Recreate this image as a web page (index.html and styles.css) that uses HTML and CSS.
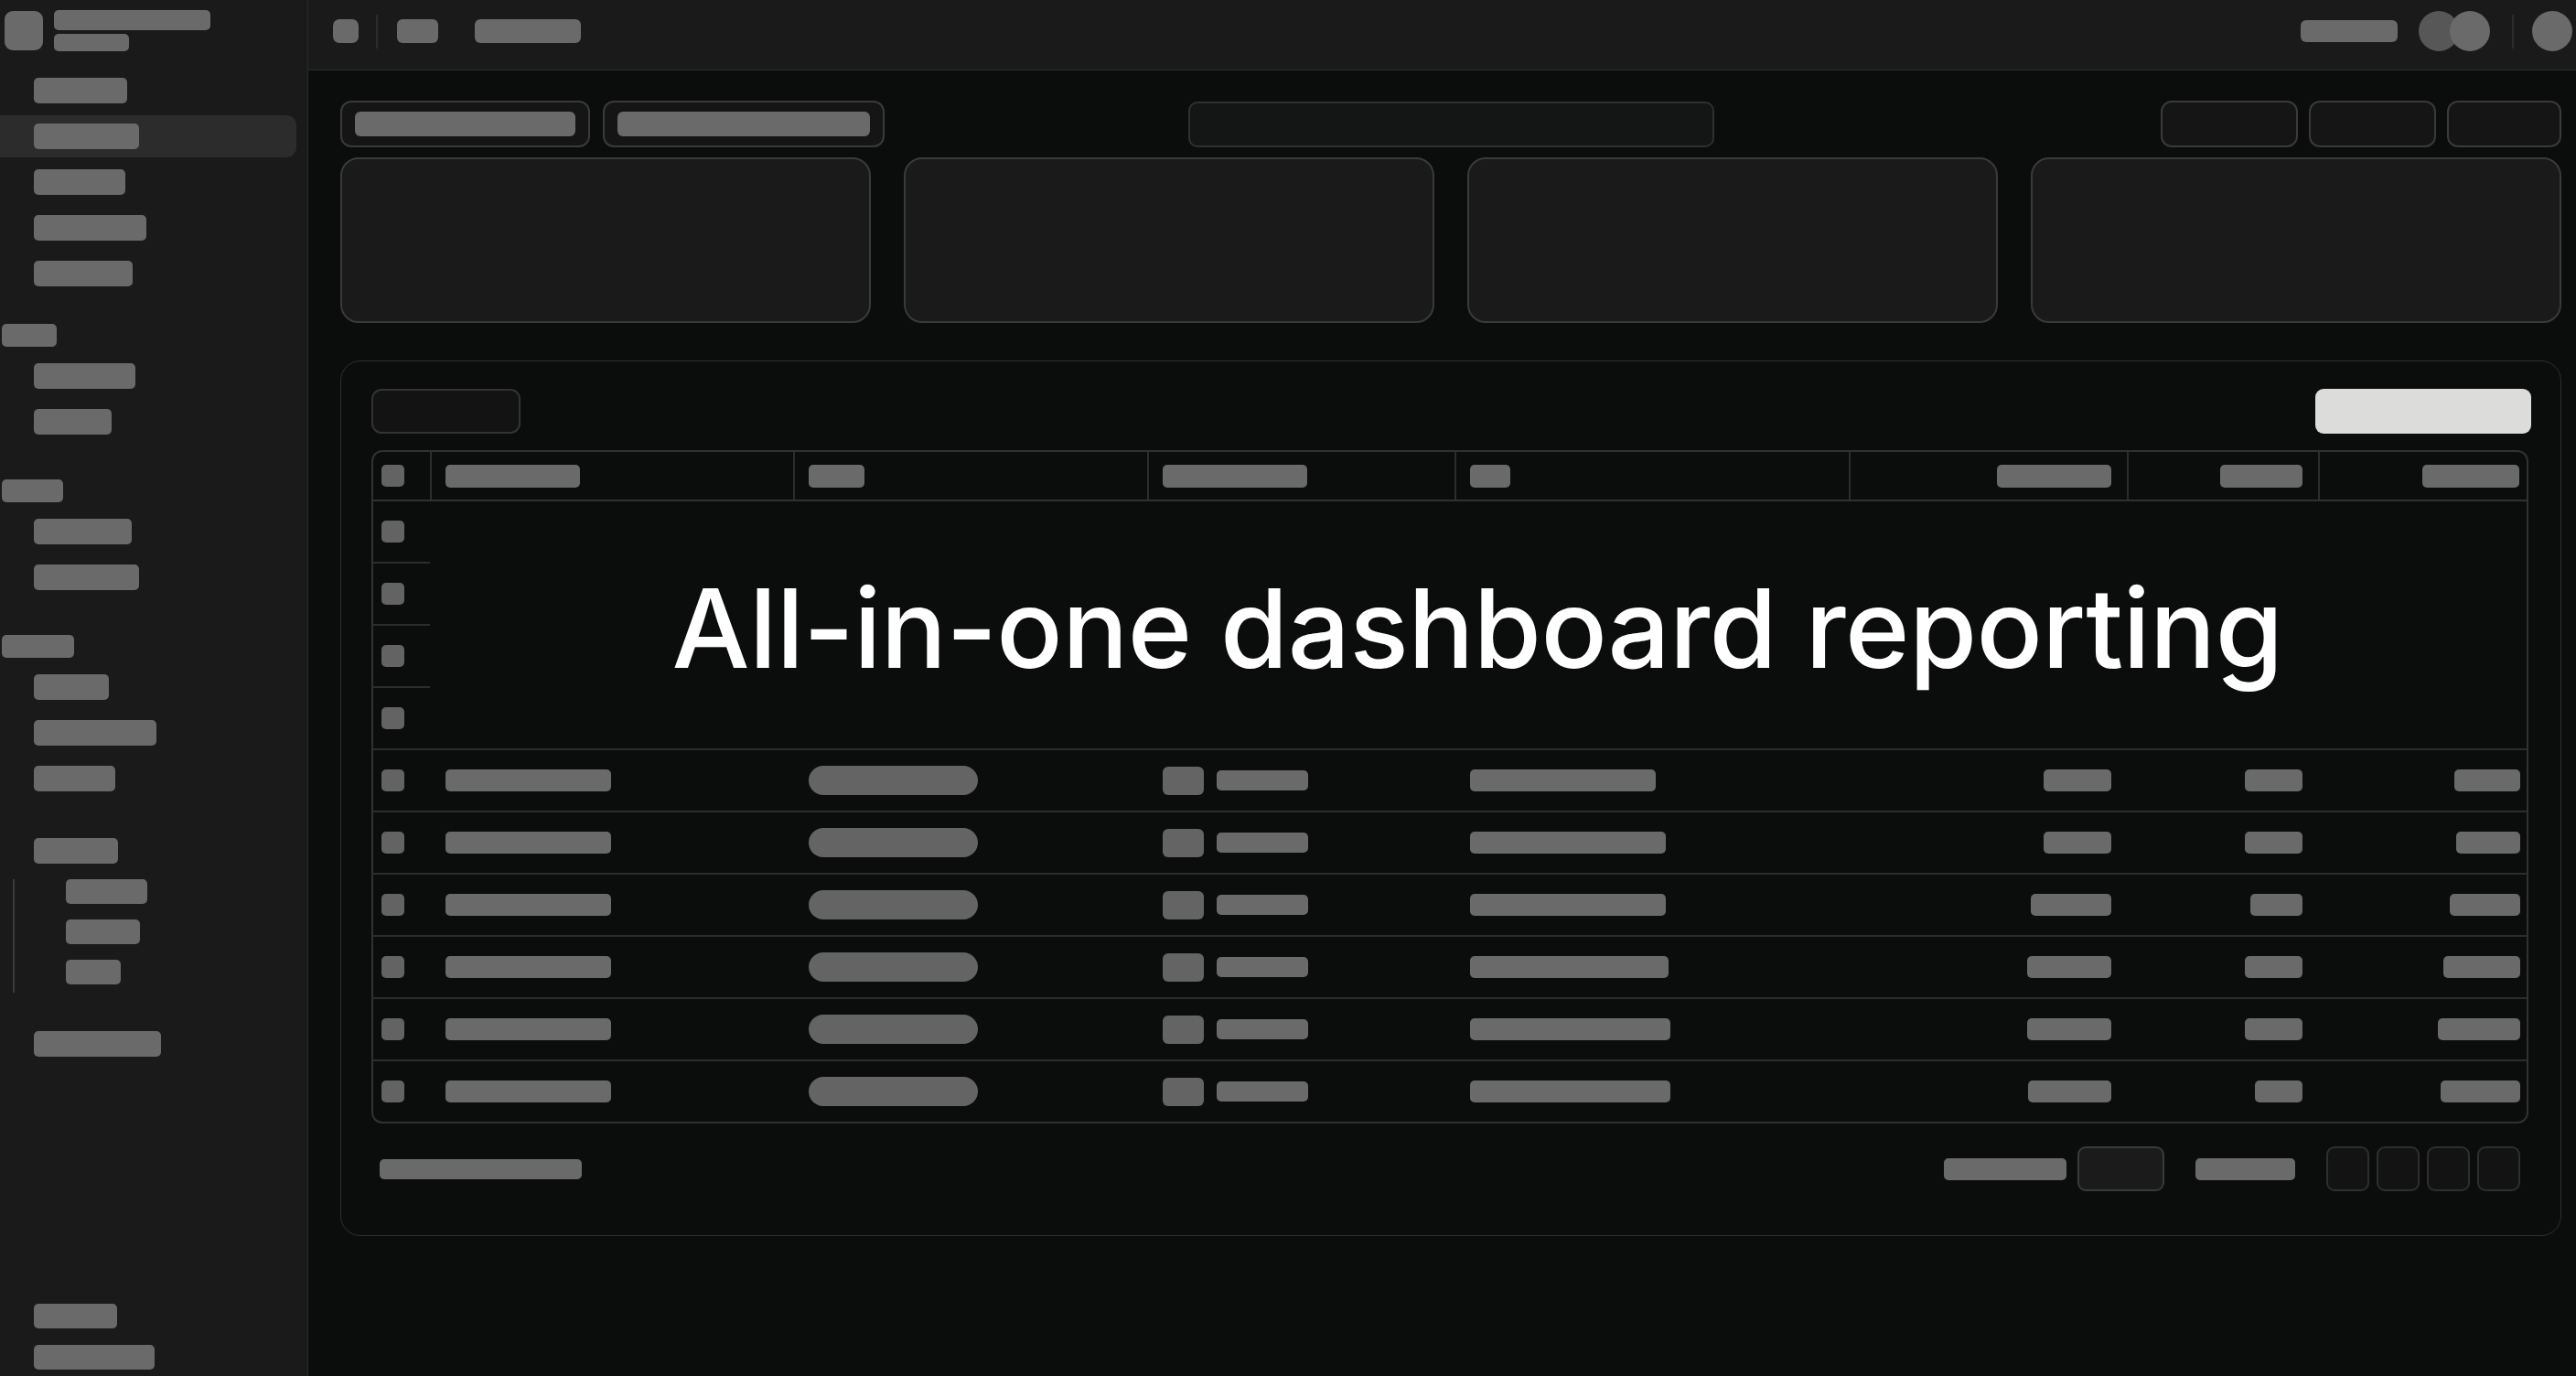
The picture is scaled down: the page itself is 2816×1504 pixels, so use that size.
FILE: index.html
```html
<!DOCTYPE html>
<html lang="en">
<head>
<meta charset="utf-8">
<title>Dashboard reporting</title>
<link rel="stylesheet" href="styles.css">
</head>
<body>
<aside class="sidebar">
  <div class="brand">
    <div class="logo"></div>
    <div class="brand-text">
      <div class="ph brand-title"></div>
      <div class="ph brand-sub"></div>
    </div>
  </div>
  <nav class="nav">
    <div class="nav-item"><span class="ph" style="width:102px"></span></div>
    <div class="nav-item active"><span class="ph" style="width:115px"></span></div>
    <div class="nav-item"><span class="ph" style="width:100px"></span></div>
    <div class="nav-item"><span class="ph" style="width:123px"></span></div>
    <div class="nav-item"><span class="ph" style="width:108px"></span></div>

    <div class="section first"><span class="ph" style="width:60px"></span></div>
    <div class="nav-item"><span class="ph" style="width:111px"></span></div>
    <div class="nav-item"><span class="ph" style="width:85px"></span></div>

    <div class="section"><span class="ph" style="width:67px"></span></div>
    <div class="nav-item"><span class="ph" style="width:107px"></span></div>
    <div class="nav-item"><span class="ph" style="width:115px"></span></div>

    <div class="section"><span class="ph" style="width:79px"></span></div>
    <div class="nav-item"><span class="ph" style="width:82px"></span></div>
    <div class="nav-item"><span class="ph" style="width:134px"></span></div>
    <div class="nav-item"><span class="ph" style="width:89px"></span></div>

    <div class="nav-item spaced"><span class="ph" style="width:92px"></span></div>
    <div class="sub-list">
      <div class="sub-item"><span class="ph" style="width:89px"></span></div>
      <div class="sub-item"><span class="ph" style="width:81px"></span></div>
      <div class="sub-item"><span class="ph" style="width:60px"></span></div>
    </div>
    <div class="nav-item after-sub"><span class="ph" style="width:139px"></span></div>
  </nav>
  <div class="nav-bottom">
    <span class="ph" style="width:91px"></span>
    <span class="ph" style="width:132px"></span>
  </div>
</aside>

<main class="main">
  <header class="topbar">
    <div class="top-left">
      <span class="ph top-square"></span>
      <span class="vdiv"></span>
      <span class="ph top-a"></span>
      <span class="ph top-b"></span>
    </div>
    <div class="top-right">
      <span class="ph top-c"></span>
      <div class="avatars">
        <span class="avatar dim"></span>
        <span class="avatar"></span>
      </div>
      <span class="vdiv"></span>
      <span class="avatar"></span>
    </div>
  </header>

  <div class="content">
    <div class="filters">
      <div class="filter-left">
        <div class="pill-btn"><span class="ph" style="width:241px"></span></div>
        <div class="pill-btn"><span class="ph" style="width:276px"></span></div>
      </div>
      <div class="search"></div>
      <div class="filter-right">
        <div class="btn" style="width:150px"></div>
        <div class="btn" style="width:139px"></div>
        <div class="btn" style="width:125px"></div>
      </div>
    </div>

    <div class="cards">
      <div class="card"></div>
      <div class="card"></div>
      <div class="card"></div>
      <div class="card"></div>
    </div>

    <section class="panel">
      <div class="panel-top">
        <div class="ghost-btn"></div>
        <div class="primary-btn"></div>
      </div>

      <div class="table">
        <div class="trow thead">
          <div class="cell c0"><span class="chk"></span></div>
          <div class="cell"><span class="ph hb" style="width:147px"></span></div>
          <div class="cell"><span class="ph hb" style="width:61px"></span></div>
          <div class="cell"><span class="ph hb" style="width:158px"></span></div>
          <div class="cell"><span class="ph hb" style="width:44px"></span></div>
          <div class="cell end"><span class="ph hb" style="width:125px"></span></div>
          <div class="cell end"><span class="ph hb" style="width:90px"></span></div>
          <div class="cell end last"><span class="ph hb" style="width:106px"></span></div>
        </div>

        <div class="hero">
          <div class="hero-checks">
            <div class="hcell"><span class="chk"></span></div>
            <div class="hcell"><span class="chk"></span></div>
            <div class="hcell"><span class="chk"></span></div>
            <div class="hcell"><span class="chk"></span></div>
          </div>
          <div class="hero-title">
            <h1>All-in-one dashboard reporting</h1>
          </div>
        </div>

        <div class="trow">
          <div class="cell c0"><span class="chk"></span></div>
          <div class="cell"><span class="ph rb" style="width:181px"></span></div>
          <div class="cell"><span class="tag"></span></div>
          <div class="cell"><span class="sq"></span><span class="ph rb2"></span></div>
          <div class="cell"><span class="ph rb" style="width:203px"></span></div>
          <div class="cell end"><span class="ph rb" style="width:74px"></span></div>
          <div class="cell end"><span class="ph rb" style="width:63px"></span></div>
          <div class="cell end last"><span class="ph rb" style="width:72px"></span></div>
        </div>
        <div class="trow">
          <div class="cell c0"><span class="chk"></span></div>
          <div class="cell"><span class="ph rb" style="width:181px"></span></div>
          <div class="cell"><span class="tag"></span></div>
          <div class="cell"><span class="sq"></span><span class="ph rb2"></span></div>
          <div class="cell"><span class="ph rb" style="width:214px"></span></div>
          <div class="cell end"><span class="ph rb" style="width:74px"></span></div>
          <div class="cell end"><span class="ph rb" style="width:63px"></span></div>
          <div class="cell end last"><span class="ph rb" style="width:70px"></span></div>
        </div>
        <div class="trow">
          <div class="cell c0"><span class="chk"></span></div>
          <div class="cell"><span class="ph rb" style="width:181px"></span></div>
          <div class="cell"><span class="tag"></span></div>
          <div class="cell"><span class="sq"></span><span class="ph rb2"></span></div>
          <div class="cell"><span class="ph rb" style="width:214px"></span></div>
          <div class="cell end"><span class="ph rb" style="width:88px"></span></div>
          <div class="cell end"><span class="ph rb" style="width:57px"></span></div>
          <div class="cell end last"><span class="ph rb" style="width:77px"></span></div>
        </div>
        <div class="trow">
          <div class="cell c0"><span class="chk"></span></div>
          <div class="cell"><span class="ph rb" style="width:181px"></span></div>
          <div class="cell"><span class="tag"></span></div>
          <div class="cell"><span class="sq"></span><span class="ph rb2"></span></div>
          <div class="cell"><span class="ph rb" style="width:217px"></span></div>
          <div class="cell end"><span class="ph rb" style="width:92px"></span></div>
          <div class="cell end"><span class="ph rb" style="width:63px"></span></div>
          <div class="cell end last"><span class="ph rb" style="width:84px"></span></div>
        </div>
        <div class="trow">
          <div class="cell c0"><span class="chk"></span></div>
          <div class="cell"><span class="ph rb" style="width:181px"></span></div>
          <div class="cell"><span class="tag"></span></div>
          <div class="cell"><span class="sq"></span><span class="ph rb2"></span></div>
          <div class="cell"><span class="ph rb" style="width:219px"></span></div>
          <div class="cell end"><span class="ph rb" style="width:92px"></span></div>
          <div class="cell end"><span class="ph rb" style="width:63px"></span></div>
          <div class="cell end last"><span class="ph rb" style="width:90px"></span></div>
        </div>
        <div class="trow">
          <div class="cell c0"><span class="chk"></span></div>
          <div class="cell"><span class="ph rb" style="width:181px"></span></div>
          <div class="cell"><span class="tag"></span></div>
          <div class="cell"><span class="sq"></span><span class="ph rb2"></span></div>
          <div class="cell"><span class="ph rb" style="width:219px"></span></div>
          <div class="cell end"><span class="ph rb" style="width:91px"></span></div>
          <div class="cell end"><span class="ph rb" style="width:52px"></span></div>
          <div class="cell end last"><span class="ph rb" style="width:87px"></span></div>
        </div>
      </div>

      <div class="panel-foot">
        <span class="ph foot-left"></span>
        <div class="pager">
          <span class="ph pg-label" style="width:134px"></span>
          <span class="pg-select"></span>
          <span class="ph pg-label gap" style="width:109px"></span>
          <div class="pg-pages">
            <span class="pg"></span>
            <span class="pg"></span>
            <span class="pg"></span>
            <span class="pg"></span>
          </div>
        </div>
      </div>
    </section>
  </div>
</main>
</body>
</html>
```

FILE: styles.css
```css
* { box-sizing: border-box; }

html, body {
  margin: 0;
  padding: 0;
}

body {
  width: 2816px;
  height: 1504px;
  overflow: hidden;
  background: #0b0c0c;
  font-family: Inter, "Noto Sans", "Liberation Sans", sans-serif;
  display: flex;
}

.ph {
  display: block;
  background: #6a6a6a;
  border-radius: 5px;
  height: 27px;
  flex: none;
}

/* ---------- Sidebar ---------- */
.sidebar {
  width: 337px;
  flex: none;
  height: 1504px;
  background: #1a1a1b;
  border-right: 1px solid #2a2a2b;
  display: flex;
  flex-direction: column;
}

.brand {
  height: 74px;
  display: flex;
  align-items: flex-start;
  gap: 12px;
  padding: 12px 0 0 5px;
}

.logo {
  width: 42px;
  height: 43px;
  border-radius: 9px;
  background: #6a6a6a;
}

.brand-text {
  margin-top: -1px;
  display: flex;
  flex-direction: column;
  gap: 4px;
}

.brand-title { width: 171px; height: 22px; }
.brand-sub { width: 82px; height: 19px; }

.nav {
  display: flex;
  flex-direction: column;
}

.nav-item {
  height: 50px;
  display: flex;
  align-items: center;
  padding-left: 37px;
}

.nav-item .ph { height: 28px; }

.nav-item.active {
  height: 46px;
  margin: 2px 12px 2px 0;
  background: #2c2c2d;
  border-radius: 0 11px 11px 0;
}

.section {
  margin: 38px 0 7px;
  padding-left: 2px;
}

.section.first { margin-top: 30px; }

.section .ph { height: 25px; }

.nav-item.spaced { margin-top: 29px; }

.sub-list {
  margin: 6px 0 0 14px;
  padding: 0 0 9px 56px;
  border-left: 2px solid #3a3a3b;
  display: flex;
  flex-direction: column;
  gap: 17px;
}

.sub-item .ph { height: 27px; }

.nav-item.after-sub { margin-top: 31px; }

.nav-bottom {
  margin-top: auto;
  padding: 0 0 7px 37px;
  display: flex;
  flex-direction: column;
  gap: 18px;
}

/* ---------- Main ---------- */
.main {
  flex: 1;
  min-width: 0;
  display: flex;
  flex-direction: column;
}

.topbar {
  height: 77px;
  flex: none;
  background: #1a1a1b;
  border-bottom: 1px solid #2e2e2f;
  display: flex;
  align-items: center;
  justify-content: space-between;
  padding: 0 4px 8px 27px;
}

.top-left, .top-right {
  display: flex;
  align-items: center;
}

.top-square { width: 28px; height: 26px; border-radius: 7px; }

.vdiv {
  width: 2px;
  height: 37px;
  background: #2c2c2d;
  flex: none;
}

.top-left .vdiv { margin: 0 21px 0 19px; }

.top-a { width: 45px; height: 26px; border-radius: 6px; }
.top-b { width: 116px; height: 26px; border-radius: 6px; margin-left: 40px; }

.top-c { width: 106px; height: 24px; border-radius: 6px; }

.avatars {
  display: flex;
  margin-left: 23px;
}

.avatar {
  width: 44px;
  height: 44px;
  border-radius: 50%;
  background: #6a6a6a;
  flex: none;
}

.avatar.dim { background: #575757; }
.avatars .avatar + .avatar { margin-left: -10px; }

.top-right .vdiv { margin: 0 20px 0 24px; }

/* ---------- Content ---------- */
.content {
  padding: 33px 16px 0 35px;
  display: flex;
  flex-direction: column;
}

.filters {
  height: 51px;
  display: grid;
  grid-template-columns: 1fr auto 1fr;
  align-items: center;
}

.filter-left {
  display: flex;
  gap: 14px;
}

.pill-btn {
  height: 51px;
  padding: 0 14px;
  display: flex;
  align-items: center;
  background: #151516;
  border: 2px solid #3a3a3b;
  border-radius: 12px;
}

.pill-btn .ph { height: 27px; border-radius: 6px; }

.search {
  width: 575px;
  height: 50px;
  background: #141515;
  border: 2px solid #303031;
  border-radius: 10px;
}

.filter-right {
  display: flex;
  justify-content: flex-end;
  gap: 12px;
}

.btn {
  height: 51px;
  background: #151516;
  border: 2px solid #3a3a3b;
  border-radius: 12px;
}

.cards {
  margin-top: 11px;
  display: grid;
  grid-template-columns: repeat(4, 1fr);
  gap: 36px;
}

.card {
  height: 181px;
  background: #1a1a1b;
  border: 2px solid #3a3a3b;
  border-radius: 20px;
}

/* ---------- Panel ---------- */
.panel {
  margin-top: 41px;
  height: 957px;
  border: 1px solid #2f2f30;
  border-radius: 22px;
  padding: 30px 35px 0 33px;
  display: flex;
  flex-direction: column;
}

.panel-top {
  height: 49px;
  display: flex;
  justify-content: space-between;
  align-items: center;
}

.ghost-btn {
  width: 163px;
  height: 49px;
  background: #131314;
  border: 2px solid #333334;
  border-radius: 11px;
}

.primary-btn {
  width: 236px;
  height: 49px;
  margin-right: -3px;
  background: #dcdcda;
  border-radius: 9px;
}

.table {
  margin-top: 18px;
  border: 2px solid #313132;
  border-radius: 12px;
  display: flex;
  flex-direction: column;
}

.trow {
  height: 68px;
  display: grid;
  grid-template-columns: 62px 397px 387px 336px 431px 304px 209px 228px;
  border-bottom: 2px solid #2c2c2d;
}

.trow:last-child {
  height: 66px;
  border-bottom: none;
}

.trow.thead {
  height: 54px;
  border-bottom: 2px solid #313132;
}

.cell {
  display: flex;
  align-items: center;
  padding: 0 17px;
  min-width: 0;
}

.cell.c0 { padding: 0 0 0 9px; }
.cell.end { justify-content: flex-end; }
.cell.last { padding-right: 7px; }

.thead .cell + .cell {
  border-left: 2px solid #2c2c2d;
  padding-left: 15px;
}

.thead .cell.end { padding-right: 17px; }
.thead .cell.last { padding-right: 8px; }

.hb { height: 25px; }
.rb { height: 24px; }
.rb2 { width: 100px; height: 22px; margin-left: 14px; }

.chk {
  width: 25px;
  height: 24px;
  border-radius: 5px;
  background: #636363;
  flex: none;
}

.tag {
  width: 185px;
  height: 32px;
  border-radius: 16px;
  background: #646464;
  flex: none;
}

.sq {
  width: 45px;
  height: 31px;
  border-radius: 6px;
  background: #646464;
  flex: none;
}

.hero {
  height: 272px;
  display: grid;
  grid-template-columns: 62px 1fr;
  border-bottom: 2px solid #2c2c2d;
}

.hero-checks {
  display: flex;
  flex-direction: column;
}

.hcell {
  flex: 1;
  display: flex;
  align-items: center;
  padding-left: 9px;
  border-bottom: 2px solid #2c2c2d;
}

.hcell:last-child { border-bottom: none; }

.hero-title {
  display: flex;
  align-items: center;
  justify-content: center;
  background: #0b0c0c;
  margin-right: 2px;
  padding-top: 8px;
}

.hero-title h1 {
  margin: 0;
  color: #ffffff;
  font-family: Inter, "Noto Sans", sans-serif;
  font-weight: 500;
  font-size: 120px;
  line-height: 1;
  letter-spacing: -0.6px;
  white-space: nowrap;
}

.panel-foot {
  margin-top: 25px;
  height: 49px;
  padding: 0 9px;
  display: flex;
  align-items: center;
  justify-content: space-between;
}

.foot-left { width: 221px; height: 22px; }

.pager {
  display: flex;
  align-items: center;
}

.pg-label { height: 24px; }
.pg-label.gap { margin-left: 34px; }

.pg-select {
  width: 95px;
  height: 49px;
  margin-left: 12px;
  background: #1b1b1c;
  border: 2px solid #3a3a3b;
  border-radius: 9px;
}

.pg-pages {
  margin-left: 34px;
  display: flex;
  gap: 8px;
}

.pg {
  width: 47px;
  height: 49px;
  background: #131314;
  border: 2px solid #2e2e2f;
  border-radius: 9px;
}
```
